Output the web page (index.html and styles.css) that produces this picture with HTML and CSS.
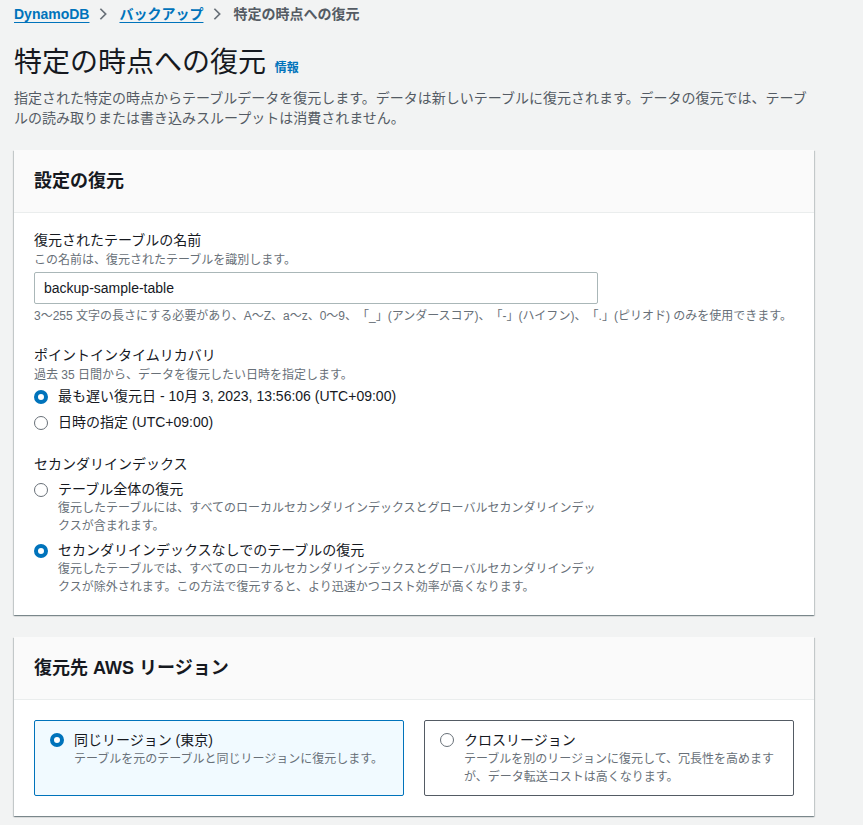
FILE: index.html
```html
<!DOCTYPE html>
<html lang="ja">
<head>
<meta charset="utf-8">
<title>特定の時点への復元</title>
<link rel="stylesheet" href="styles.css">
</head>
<body>
<div class="page">
  <nav class="crumbs">
    <a class="crumb-link" href="#">DynamoDB</a>
    <svg class="chev" viewBox="0 0 16 16" width="16" height="16"><path d="M5 2 L11 8 L5 14" fill="none" stroke="#687078" stroke-width="2"/></svg>
    <a class="crumb-link" href="#">バックアップ</a>
    <svg class="chev" viewBox="0 0 16 16" width="16" height="16"><path d="M5 2 L11 8 L5 14" fill="none" stroke="#687078" stroke-width="2"/></svg>
    <span class="crumb-current">特定の時点への復元</span>
  </nav>

  <header class="page-head">
    <h1 class="title">特定の時点への復元 <a class="info" href="#">情報</a></h1>
    <p class="lead">指定された特定の時点からテーブルデータを復元します。データは新しいテーブルに復元されます。データの復元では、テーブルの読み取りまたは書き込みスループットは消費されません。</p>
  </header>

  <section class="panel">
    <div class="panel-head"><h2>設定の復元</h2></div>
    <div class="panel-body">
      <div class="field">
        <div class="label">復元されたテーブルの名前</div>
        <div class="desc">この名前は、復元されたテーブルを識別します。</div>
        <div class="input">backup-sample-table</div>
        <div class="constraint">3〜255 文字の長さにする必要があり、A〜Z、a〜z、0〜9、「_」(アンダースコア)、「-」(ハイフン)、「.」(ピリオド) のみを使用できます。</div>
      </div>

      <div class="field">
        <div class="label">ポイントインタイムリカバリ</div>
        <div class="desc">過去 35 日間から、データを復元したい日時を指定します。</div>
        <div class="radios tight">
          <div class="radio"><span class="dot on"></span><div class="rtext"><div class="rlabel">最も遅い復元日 - 10月 3, 2023, 13:56:06 (UTC+09:00)</div></div></div>
          <div class="radio"><span class="dot"></span><div class="rtext"><div class="rlabel">日時の指定 (UTC+09:00)</div></div></div>
        </div>
      </div>

      <div class="field">
        <div class="label">セカンダリインデックス</div>
        <div class="radios">
          <div class="radio"><span class="dot"></span><div class="rtext"><div class="rlabel">テーブル全体の復元</div><div class="rdesc">復元したテーブルには、すべてのローカルセカンダリインデックスとグローバルセカンダリインデックスが含まれます。</div></div></div>
          <div class="radio"><span class="dot on"></span><div class="rtext"><div class="rlabel">セカンダリインデックスなしでのテーブルの復元</div><div class="rdesc">復元したテーブルでは、すべてのローカルセカンダリインデックスとグローバルセカンダリインデックスが除外されます。この方法で復元すると、より迅速かつコスト効率が高くなります。</div></div></div>
        </div>
      </div>
    </div>
  </section>

  <section class="panel">
    <div class="panel-head"><h2>復元先 AWS リージョン</h2></div>
    <div class="panel-body tiles">
      <div class="tile selected">
        <span class="dot on"></span>
        <div class="rtext"><div class="rlabel">同じリージョン (東京)</div><div class="rdesc">テーブルを元のテーブルと同じリージョンに復元します。</div></div>
      </div>
      <div class="tile">
        <span class="dot"></span>
        <div class="rtext"><div class="rlabel">クロスリージョン</div><div class="rdesc">テーブルを別のリージョンに復元して、冗長性を高めますが、データ転送コストは高くなります。</div></div>
      </div>
    </div>
  </section>
</div>
</body>
</html>
```
FILE: styles.css
```css
* { box-sizing: border-box; }
html, body { margin: 0; padding: 0; }
body {
  background: #f2f3f3;
  color: #16191f;
  font-family: "Liberation Sans", "Noto Sans CJK JP", sans-serif;
  font-size: 14px;
  line-height: 20px;
  text-spacing-trim: space-all;
}
.page { width: 828px; padding: 4px 14px 8px 14px; }
.crumbs { display: flex; align-items: center; height: 20px; font-weight: bold; font-size: 14px; }
.crumb-link { color: #0073bb; text-decoration: underline; text-underline-offset: 3px; }
.chev { margin: 0 9px 0 7px; width: 14px; height: 14px; flex: none; }
.crumb-current { color: #545b64; }

.page-head { margin-top: 21px; width: 800px; }
.title { margin: 0; font-size: 28px; line-height: 36px; font-weight: 400; }
.info { font-size: 12px; font-weight: bold; color: #0073bb; text-decoration: none; margin-left: 1px; }
.lead { margin: 2px 0 0 0; color: #545b64; font-size: 14px; line-height: 20px; }

.panel {
  width: 800px;
  margin-top: 22px;
  background: #fff;
  box-shadow: 0 1px 1px 0 rgba(0,28,36,.3), 1px 1px 1px 0 rgba(0,28,36,.15), -1px 1px 1px 0 rgba(0,28,36,.15);
}
.panel + .panel { margin-top: 22px; }
.panel-head { background: #fafafa; border-bottom: 1px solid #eaeded; padding: 20px 20px; }
.panel-head h2 { margin: 0; font-size: 18px; line-height: 22px; font-weight: bold; }
.panel-body { padding: 16px 20px 19px 20px; }

.field + .field { margin-top: 20px; }
.label { font-size: 14px; line-height: 22px; }
.desc { font-size: 12px; line-height: 18px; color: #687078; }
.input {
  width: 564px; height: 32px; margin-top: 3px;
  border: 1px solid #aab7b8; border-radius: 2px;
  padding: 0 9px; font-size: 14px; line-height: 30px; color: #16191f;
}
.constraint { margin-top: 4px; font-size: 12px; line-height: 16px; color: #687078; }

.radios { width: 564px; margin-top: 4px; display: flex; flex-direction: column; gap: 5px; }
.radios.tight { margin-top: 1px; gap: 4px; }
.radio { display: flex; align-items: flex-start; }
.radio .dot { margin-top: 4px; }
.rtext { margin-left: 10px; flex: 1; }
.rlabel { font-size: 14px; line-height: 20px; }
.radios.tight .rlabel { line-height: 22px; }
.radios.tight .dot { margin-top: 5px; }
.rdesc { font-size: 12px; line-height: 18px; color: #687078; }

.dot {
  flex: none; display: inline-block; width: 14px; height: 14px; border-radius: 50%;
  border: 1.5px solid #687078; background: #fff;
}
.dot.on { border: 4px solid #0073bb; }

.tiles { display: flex; gap: 20px; padding: 20px 20px 20px 20px; }
.tile {
  width: 370px; height: 76px; display: flex; align-items: flex-start;
  border: 1px solid #545b64; border-radius: 2px; padding: 9px 15px 9px 15px;
}
.tile .dot { margin-top: 3px; }
.tile.selected { background: #f1faff; border-color: #0073bb; }
```
